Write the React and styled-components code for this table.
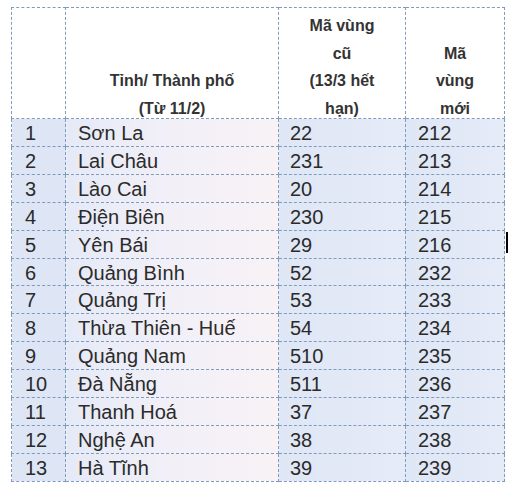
import React from "react";
import styled, { createGlobalStyle } from "styled-components";

const GlobalStyle = createGlobalStyle`
  html, body {
    margin: 0;
    padding: 0;
    background: #ffffff;
  }
  body {
    font-family: "Liberation Sans", Arial, sans-serif;
  }
`;

const Page = styled.div`
  position: relative;
  width: 516px;
  height: 485px;
  padding: 7px 0 0 11px;
  box-sizing: border-box;
  background: #fff;
`;

const Table = styled.table`
  border-collapse: collapse;
  table-layout: fixed;
  width: 493px;

  th, td {
    border: 1px dashed #7f9cbd;
    padding: 0;
  }
`;

const HeadCell = styled.th`
  background: #fff;
  color: #333;
  font-size: 16px;
  font-weight: bold;
  text-align: center;
  vertical-align: bottom;
  line-height: 27.5px;
`;

const HeadText = styled.div`
  height: 110px;
  display: flex;
  flex-direction: column;
  justify-content: flex-end;
  transform: translateY(4px);
`;

const Cell = styled.td`
  padding: 3px 0 0 ${(p) => p.$indent}px !important;
  font-size: 20px;
  line-height: 23.9px;
  color: #2b2b2b;
  white-space: nowrap;
  background: ${(p) =>
    p.$tone === "name"
      ? "linear-gradient(to right, #e5eaf7 0%, #f1eff7 45%, #f8f2f6 100%)"
      : p.$tone === "index"
      ? "#dee6f6"
      : "linear-gradient(to right, #dfe6f5, #e5ebf7)"};
`;

const Caret = styled.div`
  position: absolute;
  left: 506px;
  top: 232px;
  width: 2px;
  height: 21px;
  background: #000;
`;

const rows = [
  ["1", "Sơn La", "22", "212"],
  ["2", "Lai Châu", "231", "213"],
  ["3", "Lào Cai", "20", "214"],
  ["4", "Điện Biên", "230", "215"],
  ["5", "Yên Bái", "29", "216"],
  ["6", "Quảng Bình", "52", "232"],
  ["7", "Quảng Trị", "53", "233"],
  ["8", "Thừa Thiên - Huế", "54", "234"],
  ["9", "Quảng Nam", "510", "235"],
  ["10", "Đà Nẵng", "511", "236"],
  ["11", "Thanh Hoá", "37", "237"],
  ["12", "Nghệ An", "38", "238"],
  ["13", "Hà Tĩnh", "39", "239"],
];

export default function App() {
  return (
    <Page>
      <GlobalStyle />
      <Table>
        <colgroup>
          <col style={{ width: 54 }} />
          <col style={{ width: 213 }} />
          <col style={{ width: 127 }} />
          <col style={{ width: 99 }} />
        </colgroup>
        <thead>
          <tr>
            <HeadCell>
              <HeadText />
            </HeadCell>
            <HeadCell>
              <HeadText>
                <span>Tỉnh/ Thành phố</span>
                <span>(Từ 11/2)</span>
              </HeadText>
            </HeadCell>
            <HeadCell>
              <HeadText>
                <span>Mã vùng</span>
                <span>cũ</span>
                <span>(13/3 hết</span>
                <span>hạn)</span>
              </HeadText>
            </HeadCell>
            <HeadCell>
              <HeadText>
                <span>Mã</span>
                <span>vùng</span>
                <span>mới</span>
              </HeadText>
            </HeadCell>
          </tr>
        </thead>
        <tbody>
          {rows.map(([idx, name, oldCode, newCode]) => (
            <tr key={idx}>
              <Cell $tone="index" $indent={13}>{idx}</Cell>
              <Cell $tone="name" $indent={12}>{name}</Cell>
              <Cell $tone="code" $indent={11}>{oldCode}</Cell>
              <Cell $tone="code" $indent={12}>{newCode}</Cell>
            </tr>
          ))}
        </tbody>
      </Table>
      <Caret />
    </Page>
  );
}
